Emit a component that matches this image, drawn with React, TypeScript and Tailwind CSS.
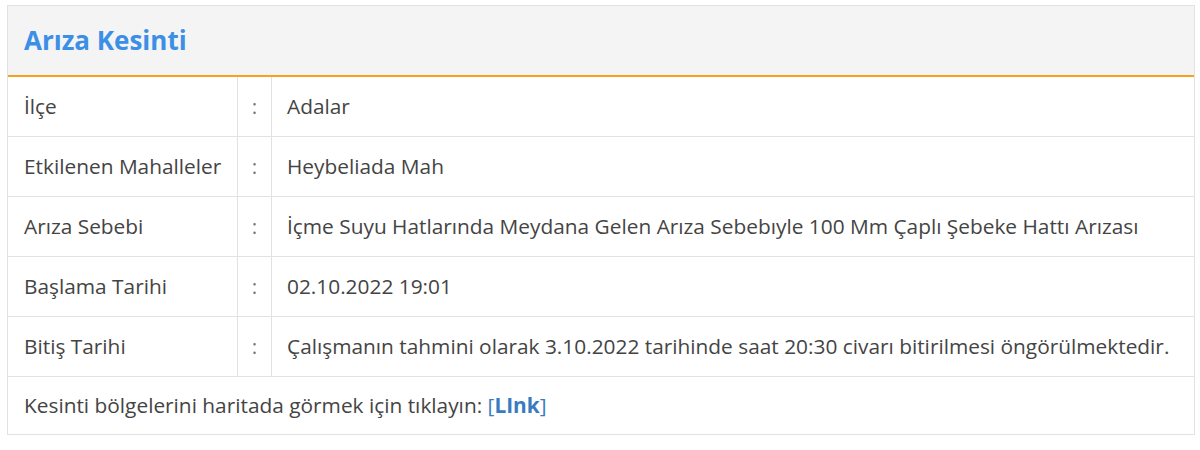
const rows: [string, string][] = [
  ["İlçe", "Adalar"],
  ["Etkilenen Mahalleler", "Heybeliada Mah"],
  ["Arıza Sebebi", "İçme Suyu Hatlarında Meydana Gelen Arıza Sebebıyle 100 Mm Çaplı Şebeke Hattı Arızası"],
  ["Başlama Tarihi", "02.10.2022 19:01"],
  ["Bitiş Tarihi", "Çalışmanın tahmini olarak 3.10.2022 tarihinde saat 20:30 civarı bitirilmesi öngörülmektedir."],
];

export default function App() {
  return (
    <div className="bg-white w-[1200px] h-[450px] pt-[5px] pl-[7px] font-['Open_Sans',sans-serif] text-[20.85px] text-[#444]">
      <div className="w-[1188px] border border-[#e2e2e2]">
        <div className="h-[71px] bg-[#f4f4f4] border-b-2 border-[#f7a21b] flex items-center px-4">
          <h1 className="text-[26px] font-bold text-[#3b8fe6]">Arıza Kesinti</h1>
        </div>
        {rows.map(([label, value]) => (
          <div key={label} className="flex h-[60px] border-b border-[#e2e2e2]">
            <div className="w-[230px] flex items-center pl-4 border-r border-[#e2e2e2]">{label}</div>
            <div className="w-[34px] flex items-center justify-center border-r border-[#e2e2e2] text-[#777]">:</div>
            <div className="flex-1 flex items-center pl-[15px]">{value}</div>
          </div>
        ))}
        <div className="h-[57px] flex items-center pl-4">
          <span>
            Kesinti bölgelerini haritada görmek için tıklayın:{" "}
            <a className="text-[#3a7bc0]" href="#">
              [<span className="font-bold">LInk</span>]
            </a>
          </span>
        </div>
      </div>
    </div>
  );
}
